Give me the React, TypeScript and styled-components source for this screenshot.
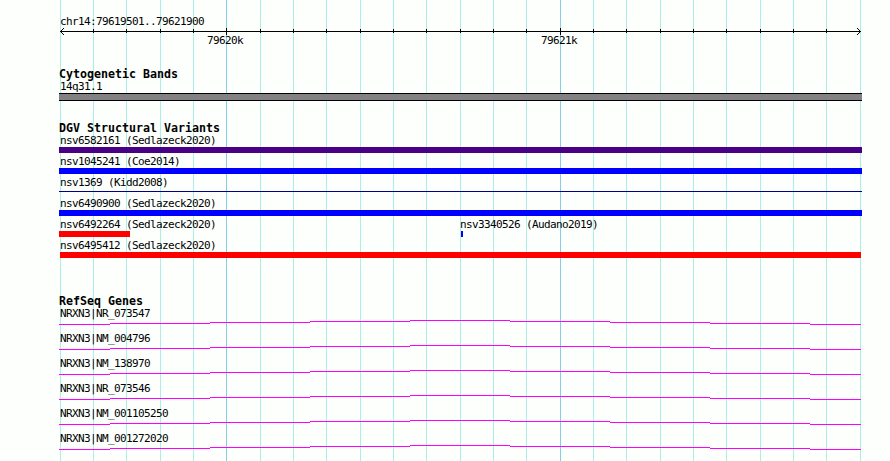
import styled, { createGlobalStyle } from "styled-components";

const GlobalStyle = createGlobalStyle`
  body {
    margin: 0;
    background: #fcfffc;
  }
`;

const WIDTH = 890;
const HEIGHT = 461;

const gridLines = Array.from({ length: 25 }, (_, i) => ({
  x: Math.floor(60 + (i * 100) / 3),
  major: i === 5 || i === 15,
}));

const Browser = styled.main`
  position: relative;
  box-sizing: border-box;
  width: ${WIDTH}px;
  height: ${HEIGHT}px;
  padding: 16px 28px 0 59px;
  overflow: hidden;
  color: #000;
  font-family: "DejaVu Sans Mono", "Liberation Mono", monospace;
`;

const Grid = styled.svg`
  position: absolute;
  top: 0;
  left: 0;
`;

const Content = styled.div`
  position: relative;
  display: flex;
  flex-direction: column;
`;

const Label = styled.div`
  height: 12px;
  padding-left: 1px;
  font-size: 11px;
  line-height: 12px;
  letter-spacing: -0.622px;
  white-space: pre;
`;

const Ruler = styled.header`
  height: 52px;
`;

const Scale = styled.svg`
  display: block;
`;

const ScaleLabels = styled.div`
  display: flex;
  gap: 297px;
  padding-left: 147px;
`;

const Track = styled.section<{ $gap: number }>`
  margin-bottom: ${({ $gap }) => $gap}px;
`;

const Title = styled.h2`
  height: 13px;
  margin: 0;
  font-size: 11.63px;
  line-height: 13px;
  font-weight: bold;
  white-space: pre;
`;

const Band = styled.div`
  box-sizing: border-box;
  width: 803px;
  height: 8px;
  border: solid #000;
  border-width: 1px 0;
  background: #848184;
`;

const Row = styled.div`
  display: flex;
  height: 21px;
`;

const Feature = styled.div<{ $width: number }>`
  flex: none;
  width: ${({ $width }) => $width}px;
`;

const Bar = styled.div<{ $color: string; $width: number; $left?: number; $thin?: boolean }>`
  width: ${({ $width }) => $width}px;
  height: ${({ $thin }) => ($thin ? 1 : 6)}px;
  margin-top: ${({ $thin }) => ($thin ? 2 : 0)}px;
  margin-left: ${({ $left = 0 }) => $left}px;
  background: ${({ $color }) => $color};
`;

const Gene = styled.div`
  height: 25px;
`;

const Intron = styled.svg`
  display: block;
`;

type Variant = {
  name: string;
  color: string;
  width: number;
  left?: number;
  thin?: boolean;
  cell?: number;
};

const variants: Variant[][] = [
  [{ name: "nsv6582161 (Sedlazeck2020)", color: "#4a0084", width: 803 }],
  [{ name: "nsv1045241 (Coe2014)", color: "#0000ff", width: 803 }],
  [{ name: "nsv1369 (Kidd2008)", color: "#000084", width: 803, thin: true }],
  [{ name: "nsv6490900 (Sedlazeck2020)", color: "#0000ff", width: 803 }],
  [
    { name: "nsv6492264 (Sedlazeck2020)", color: "#ff0000", width: 71, cell: 400 },
    { name: "nsv3340526 (Audano2019)", color: "#0000ff", width: 2, left: 2 },
  ],
  [{ name: "nsv6495412 (Sedlazeck2020)", color: "#ff0000", width: 801, left: 1 }],
];

const genes = [
  "NRXN3|NR_073547",
  "NRXN3|NM_004796",
  "NRXN3|NM_138970",
  "NRXN3|NR_073546",
  "NRXN3|NM_001105250",
  "NRXN3|NM_001272020",
];

function App() {
  return (
    <>
      <GlobalStyle />
      <Browser>
        <Grid width={WIDTH} height={HEIGHT} shapeRendering="crispEdges">
          {gridLines.map(({ x, major }) => (
            <rect key={x} x={x} width={1} height={HEIGHT} fill={major ? "#84cee7" : "#adefe7"} />
          ))}
        </Grid>
        <Content>
          <Ruler>
            <Label>chr14:79619501..79621900</Label>
            <Scale width={803} height={7} shapeRendering="crispEdges">
              <rect x={1} y={3} width={801} height={1} />
              {gridLines.slice(1, -1).map(({ x, major }) => (
                <rect key={x} x={x - 59} y={major ? 0 : 1} width={1} height={major ? 7 : 4} />
              ))}
              <path d="M4 0h1v1h-1zM3 1h1v1h-1zM2 2h1v1h-1zM2 4h1v1h-1zM3 5h1v1h-1zM4 6h1v1h-1z" />
              <path d="M798 0h1v1h-1zM799 1h1v1h-1zM800 2h1v1h-1zM800 4h1v1h-1zM799 5h1v1h-1zM798 6h1v1h-1z" />
            </Scale>
            <ScaleLabels>
              <Label>79620k</Label>
              <Label>79621k</Label>
            </ScaleLabels>
          </Ruler>
          <Track $gap={21}>
            <Title>Cytogenetic Bands</Title>
            <Label>14q31.1</Label>
            <Band />
          </Track>
          <Track $gap={34}>
            <Title>DGV Structural Variants</Title>
            {variants.map((row) => (
              <Row key={row[0].name}>
                {row.map(({ name, color, width, left, thin, cell = 803 }) => (
                  <Feature key={name} $width={cell}>
                    <Label>{name}</Label>
                    <Bar $color={color} $width={width} $left={left} $thin={thin} />
                  </Feature>
                ))}
              </Row>
            ))}
          </Track>
          <Track $gap={0}>
            <Title>RefSeq Genes</Title>
            {genes.map((gene) => (
              <Gene key={gene}>
                <Label>{gene}</Label>
                <Intron width={803} height={5} fill="#ff00ff" shapeRendering="crispEdges">
                  <path d="M0 4h51v1h-51zM51 3h100v1h-100zM151 2h100v1h-100zM251 1h100v1h-100zM351 0h100v1h-100zM451 1h100v1h-100zM551 2h100v1h-100zM651 3h100v1h-100zM751 4h51v1h-51z" />
                </Intron>
              </Gene>
            ))}
          </Track>
        </Content>
      </Browser>
    </>
  );
}

export default App;
